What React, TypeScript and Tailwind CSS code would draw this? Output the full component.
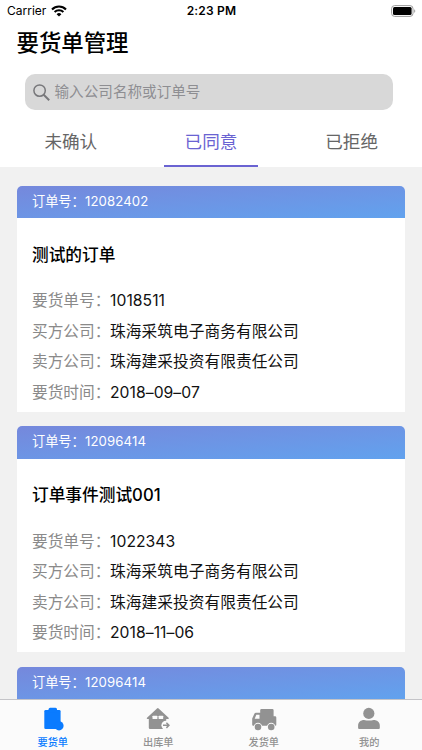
import React from 'react';

interface OrderDetail {
  title: string;
  requestNo: string;
  buyer: string;
  seller: string;
  date: string;
}

interface Order {
  orderNo: string;
  detail?: OrderDetail;
}

const orders: Order[] = [
  {
    orderNo: '12082402',
    detail: {
      title: '测试的订单',
      requestNo: '1018511',
      buyer: '珠海采筑电子商务有限公司',
      seller: '珠海建采投资有限责任公司',
      date: '2018–09–07',
    },
  },
  {
    orderNo: '12096414',
    detail: {
      title: '订单事件测试001',
      requestNo: '1022343',
      buyer: '珠海采筑电子商务有限公司',
      seller: '珠海建采投资有限责任公司',
      date: '2018–11–06',
    },
  },
  { orderNo: '12096414' },
];

const StatusBar = () => (
  <div className="grid h-[22px] shrink-0 grid-cols-3 items-center pr-[6px] pl-[7px] text-[12px] text-black">
    <div className="flex items-center gap-[5px]">
      <span>Carrier</span>
      <svg width="16" height="12" viewBox="0 0 16 12" fill="none" stroke="#000" strokeWidth="2.1">
        <path d="M1 4.4a10 10 0 0 1 14 0" />
        <path d="M3.6 7.1a6.3 6.3 0 0 1 8.8 0" />
        <path d="M8 11.6 5.6 9.2a3.4 3.4 0 0 1 4.8 0z" fill="#000" stroke="none" />
      </svg>
    </div>
    <span className="text-center font-semibold tracking-[0.2px]">2:23 PM</span>
    <svg className="justify-self-end" width="25" height="12" viewBox="0 0 25 12">
      <rect x="0.6" y="0.6" width="21.4" height="10.8" rx="3" fill="none" stroke="#9b9b9b" />
      <rect x="2" y="2" width="18.6" height="8" rx="1.5" fill="#000" />
      <path d="M23.2 4.2c1.4.4 1.4 3.2 0 3.6z" fill="#9b9b9b" />
    </svg>
  </div>
);

const Row = ({ label, value }: { label: string; value: string }) => (
  <div className="flex h-[30.6px] items-center whitespace-nowrap">
    <span className="w-[78px] text-[#8a8a8a]">{label}：</span>
    <span className="tracking-[0.05px] text-[#111]">{value}</span>
  </div>
);

const OrderCard = ({ order }: { order: Order }) => (
  <div className="shrink-0 overflow-hidden rounded-t-[5px] bg-white">
    <div className="flex h-[32.5px] items-center bg-linear-to-br from-[#7588dc] to-[#61a2ee] px-[15.5px] text-[13.2px] text-white">
      <span className="w-[53px] whitespace-nowrap">订单号：</span>
      <span className="tracking-[0.1px]">{order.orderNo}</span>
    </div>
    {order.detail && (
      <div className="h-[193.5px] px-[15.5px] pt-[22.5px] text-[15.7px]">
        <h2 className="mb-[17px] h-7 text-[16.7px] leading-7 font-medium text-black">{order.detail.title}</h2>
        <Row label="要货单号" value={order.detail.requestNo} />
        <Row label="买方公司" value={order.detail.buyer} />
        <Row label="卖方公司" value={order.detail.seller} />
        <Row label="要货时间" value={order.detail.date} />
      </div>
    )}
  </div>
);

const ClipboardIcon = () => (
  <svg width="24" height="24" viewBox="0 0 24 24" fill="currentColor">
    <rect x="3.3" y="3" width="16.3" height="19" rx="1.3" />
    <rect x="7.6" y="0.7" width="8.4" height="5" rx="1.5" />
    <circle cx="18" cy="18.8" r="4.6" />
  </svg>
);

const WarehouseIcon = () => (
  <svg width="24" height="24" viewBox="0 0 24 24" fill="currentColor">
    <path d="M11 1.4q.8-.7 1.6 0l10 9.3q.8 1-.4 1.4H20.2V22H4q-1.2 0-1.2-1.2v-8.7H1.4q-1.2-.4-.4-1.4z" />
    <rect x="6.5" y="8.7" width="4.9" height="3.3" rx="0.6" fill="#fbfbfb" />
    <rect x="12.6" y="8.7" width="4.6" height="3.3" rx="0.6" fill="#fbfbfb" />
    <circle cx="20" cy="18.3" r="4.6" fill="#fbfbfb" />
    <path d="M17 18.3h5.8M20.4 15.7l2.6 2.6-2.6 2.6" fill="none" stroke="currentColor" strokeWidth="1.5" />
  </svg>
);

const TruckIcon = () => (
  <svg width="26" height="24" viewBox="0 0 26 24" fill="currentColor">
    <path d="M9.2 3.2Q9.2 2 10.4 2h11Q22.6 2 22.6 3.2v6h1.5q1.2 0 1.2 1.2v7.4q0 .9-.9.9H2.2q-1 0-1-1v-6.2L3.5 6.6q.4-.9 1.4-.9h4.3z" />
    <path d="M5.3 7.7h3.2v4H3.7z" fill="#fbfbfb" />
    <circle cx="7" cy="20" r="4.2" fill="#fbfbfb" />
    <circle cx="20.2" cy="20" r="4.2" fill="#fbfbfb" />
    <circle cx="7" cy="20" r="3.3" />
    <circle cx="20.2" cy="20" r="3.3" />
  </svg>
);

const UserIcon = () => (
  <svg width="24" height="24" viewBox="0 0 24 24" fill="currentColor">
    <circle cx="11.8" cy="6.4" r="5.6" />
    <path d="M1.1 18.5c0-3.5 2.7-5.6 6-5.6q4.7 1.4 9.6 0c3.3 0 6.1 2.1 6.1 5.6v2.4q0 1.1-1.1 1.1H2.2q-1.1 0-1.1-1.1z" />
  </svg>
);

const tabs = [
  { label: '要货单', icon: <ClipboardIcon />, active: true },
  { label: '出库单', icon: <WarehouseIcon />, active: false },
  { label: '发货单', icon: <TruckIcon />, active: false },
  { label: '我的', icon: <UserIcon />, active: false },
];

export default function App() {
  return (
    <div className="flex h-[750px] w-[422px] flex-col overflow-hidden bg-[#f1f1f1] font-[Inter,'Noto_Sans_CJK_SC',sans-serif]">
      <header className="h-[167px] shrink-0 bg-white">
        <StatusBar />
        <h1 className="mt-[5px] ml-[16.5px] h-8 text-[22.4px] leading-8 font-medium text-black">要货单管理</h1>
        <div className="mt-[15px] mr-[29px] ml-[25px] flex h-9 items-center gap-[5px] rounded-[10px] bg-[#d8d8d8] pl-[7.5px] text-[#8e8e92]">
          <svg width="17" height="17" viewBox="0 0 17 17" fill="none" stroke="#77777a" strokeWidth="1.5">
            <circle cx="6.6" cy="6.6" r="5.7" />
            <path d="m10.7 10.7 5.5 5.5" strokeWidth="2" />
          </svg>
          <span className="pt-px text-[14.6px]">输入公司名称或订单号</span>
        </div>
        <nav className="grid h-[57px] grid-cols-3 text-[17.6px] text-[#666]">
          <div className="flex items-center justify-center pt-[7px] pl-px">未确认</div>
          <div className="mx-[23.5px] flex items-center justify-center border-b-2 border-[#6a63d2] pt-[9px] text-[#6a63d2]">
            已同意
          </div>
          <div className="flex items-center justify-center pt-[7px]">已拒绝</div>
        </nav>
      </header>

      <main className="flex min-h-0 flex-1 flex-col gap-[14.5px] overflow-hidden pt-[18.5px] pr-[17px] pl-[16.5px]">
        {orders.map((order, i) => (
          <OrderCard key={i} order={order} />
        ))}
      </main>

      <footer className="grid h-[51px] shrink-0 grid-cols-4 border-t border-[#c4c4c8] bg-[#fbfbfb]">
        {tabs.map((tab) => (
          <div
            key={tab.label}
            className={`flex flex-col items-center pt-[7px] ${tab.active ? 'text-[#0a7bff]' : 'text-[#929292]'}`}
          >
            {tab.icon}
            <span className="mt-[3px] text-[10.2px] leading-4 font-medium">{tab.label}</span>
          </div>
        ))}
      </footer>
    </div>
  );
}
